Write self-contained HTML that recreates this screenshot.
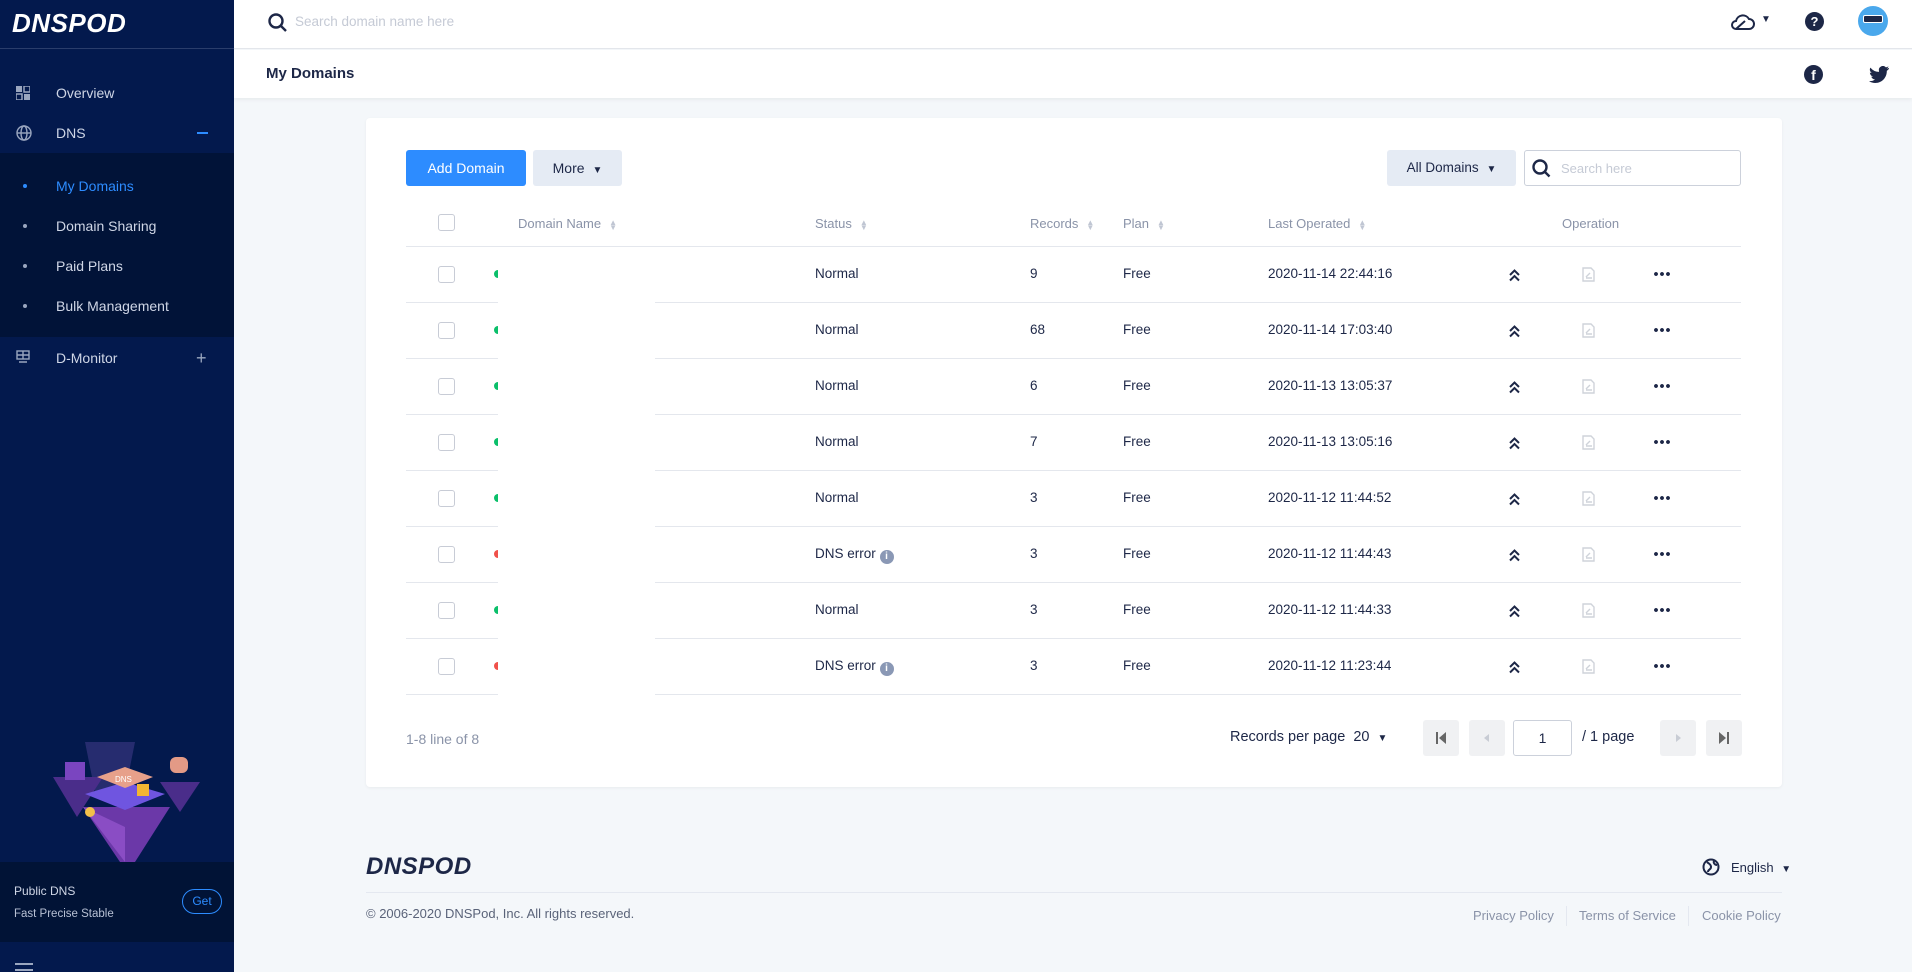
<!DOCTYPE html>
<html><head><meta charset="utf-8"><style>
*{box-sizing:border-box;margin:0;padding:0}
body{width:1912px;height:972px;overflow:hidden;background:#f4f7fa;font-family:"Liberation Sans",sans-serif;color:#1d2747;position:relative}
.abs{position:absolute}
#side{left:0;top:0;width:234px;height:972px;background:#03194d}
.logo{font-style:italic;font-weight:900;letter-spacing:0.5px;font-family:"Liberation Sans",sans-serif}
.nav{position:absolute;left:56px;font-size:14px;color:#cfd6e6}
.sub{position:absolute;left:0;top:153px;width:234px;height:184px;background:#011338}
.dot{position:absolute;left:23px;width:4px;height:4px;border-radius:50%;background:#9aa6bf}
#top{left:234px;top:0;width:1678px;height:49px;background:#fff;border-bottom:1px solid #e3e6eb}
#title{left:234px;top:50px;width:1678px;height:48px;background:#fff;box-shadow:0 2px 4px rgba(0,0,0,.05)}
#card{left:366px;top:118px;width:1416px;height:669px;background:#fff;border-radius:4px;box-shadow:0 1px 3px rgba(0,0,0,.05)}
.btn{position:absolute;height:36px;border-radius:3px;font-size:14px;line-height:36px;text-align:center}
.th{position:absolute;top:216px;font-size:13px;color:#8a93a8}
.hl{position:absolute;left:406px;width:1335px;height:1px;background:#e4e7ed}
.cell{position:absolute;font-size:13.5px;color:#1d2747}
.cb{position:absolute;left:438px;width:17px;height:17px;border:1px solid #c8ccd6;border-radius:3px;background:#fff}
.sd{position:absolute;left:494px;width:8px;height:8px;border-radius:50%}
.pg{position:absolute;top:720px;width:36px;height:36px;border-radius:3px;background:#f0f1f3}
.srt{display:inline-block;margin-left:8px;font-size:8px;color:#c0c6d3;vertical-align:middle;line-height:5px}
</style></head><body>
<div id="side" class="abs">
 <div class="abs logo" style="left:12px;top:8px;font-size:26px;color:#fff">DNSPOD</div>
 <div class="abs" style="left:0;top:48px;width:234px;height:1px;background:#2a3d6b"></div>
 <svg class="abs" style="left:16px;top:86px" width="14" height="14"><rect x="0" y="0" width="6" height="6" fill="#9aa6bf"/><rect x="8" y="0" width="6" height="6" fill="none" stroke="#9aa6bf" stroke-width="1.5"/><rect x="0" y="8" width="6" height="6" fill="none" stroke="#9aa6bf" stroke-width="1.5"/><rect x="8" y="8" width="6" height="6" fill="#9aa6bf"/></svg>
 <div class="nav" style="top:85px">Overview</div>
 <svg class="abs" style="left:16px;top:125px" width="16" height="16" fill="none" stroke="#9aa6bf" stroke-width="1.4"><circle cx="8" cy="8" r="7"/><ellipse cx="8" cy="8" rx="3" ry="7"/><path d="M1 8h14"/></svg>
 <div class="nav" style="top:125px">DNS</div>
 <div class="abs" style="left:197px;top:132px;width:11px;height:2px;background:#2d8cff"></div>
 <div class="sub"></div>
 <div class="dot" style="top:184px;background:#2d8cff"></div><div class="nav" style="top:178px;color:#2d8cff">My Domains</div>
 <div class="dot" style="top:224px"></div><div class="nav" style="top:218px">Domain Sharing</div>
 <div class="dot" style="top:264px"></div><div class="nav" style="top:258px">Paid Plans</div>
 <div class="dot" style="top:304px"></div><div class="nav" style="top:298px">Bulk Management</div>
 <svg class="abs" style="left:16px;top:350px" width="14" height="13" fill="none" stroke="#9aa6bf" stroke-width="1.4"><rect x="1" y="1" width="12" height="8"/><path d="M1 5h12M7 1v8M3 12h8"/></svg>
 <div class="nav" style="top:350px">D-Monitor</div>
 <div class="abs" style="left:196px;top:348px;color:#9aa6bf;font-size:18px">+</div>
 <svg class="abs" style="left:25px;top:732px" width="180" height="130">
  <polygon points="60,10 110,10 100,60 70,60" fill="#6a4fb0" opacity=".35"/>
  <polygon points="28,45 78,45 52,85" fill="#4a2d8a"/>
  <polygon points="58,75 145,75 110,130 95,130" fill="#6b38a8"/>
  <polygon points="58,75 100,95 100,130" fill="#8a4dc4"/>
  <polygon points="135,50 175,50 155,80" fill="#4a2d8a"/>
  <polygon points="60,62 100,50 140,62 100,78" fill="#6f55e0"/>
  <polygon points="72,45 100,35 128,45 100,56" fill="#e7a08a"/>
  <text x="90" y="50" font-size="8" fill="#fff" font-family="Liberation Sans">DNS</text>
  <rect x="40" y="30" width="20" height="18" fill="#7a45c0"/>
  <rect x="145" y="25" width="18" height="16" rx="6" fill="#e39a86"/>
  <circle cx="65" cy="80" r="5" fill="#f2c04a"/>
  <rect x="112" y="52" width="12" height="12" fill="#f2b632"/>
 </svg>
 <div class="abs" style="left:0;top:862px;width:234px;height:80px;background:#011336"></div>
 <div class="abs" style="left:14px;top:884px;font-size:12px;color:#cfd6e6">Public DNS</div>
 <div class="abs" style="left:14px;top:908px;font-size:11.5px;color:#b7c0d4">Fast Precise Stable</div>
 <div class="abs" style="left:182px;top:889px;width:40px;height:25px;border:1px solid #2d8cff;border-radius:13px;color:#2d8cff;font-size:12px;text-align:center;line-height:23px">Get</div>
 <div class="abs" style="left:15px;top:963px;width:18px;height:2px;background:#9aa6bf"></div>
 <div class="abs" style="left:15px;top:969px;width:18px;height:2px;background:#9aa6bf"></div>
</div>
<div id="top" class="abs">
 <svg class="abs" style="left:34px;top:13px" width="20" height="20" fill="none" stroke="#1d2747" stroke-width="2.4"><circle cx="8" cy="8" r="6.5"/><path d="M13 13l5 5"/></svg>
 <div class="abs" style="left:61px;top:14px;font-size:13.5px;color:#c5cad5">Search domain name here</div>
 <svg class="abs" style="left:1496px;top:13px" width="26" height="18" fill="none" stroke="#1d2747" stroke-width="2"><path d="M6 16h13a5 5 0 0 0 0-10 7 7 0 0 0-13 2 4 4 0 0 0 0 8zM6 16l9-8"/></svg>
 <div class="abs" style="left:1527px;top:14px;font-size:10px">▼</div>
 <div class="abs" style="left:1571px;top:12px;width:19px;height:19px;border-radius:50%;background:#1d2747;color:#fff;font-size:13px;font-weight:bold;text-align:center;line-height:19px">?</div>
 <div class="abs" style="left:1624px;top:6px;width:30px;height:30px;border-radius:50%;background:#4aa8ec"><div style="margin:9px 5px;width:20px;height:8px;background:#1d2747;border:1px solid #fff;border-radius:2px"></div></div>
</div>
<div id="title" class="abs">
 <div class="abs" style="left:32px;top:15px;font-size:15px;font-weight:bold">My Domains</div>
 <div class="abs" style="left:1570px;top:15px;width:19px;height:19px;border-radius:50%;background:#1d2747;color:#fff;font-size:14px;font-weight:bold;text-align:center;line-height:21px">f</div>
 <svg class="abs" style="left:1635px;top:16px" width="20" height="17"><path d="M20 2c-.7.3-1.5.5-2.3.6.8-.5 1.5-1.300 1.8-2.2-.8.5-1.7.8-2.6 1A4 4 0 0 0 10 5c0 .3 0 .6.1.9A11.4 11.4 0 0 1 1.4 1.6a4 4 0 0 0 1.3 5.4c-.7 0-1.3-.2-1.8-.5 0 2 1.4 3.6 3.2 4-.6.2-1.2.2-1.8.1.5 1.6 2 2.8 3.8 2.8A8.1 8.1 0 0 1 0 15.1 11.4 11.4 0 0 0 6.2 17c7.5 0 11.6-6.2 11.6-11.6v-.5c.9-.6 1.6-1.3 2.2-2.1z" fill="#1d2747"/></svg>
</div>
<div id="card" class="abs"></div>
<div class="btn" style="left:406px;top:150px;width:120px;background:#2d8cff;color:#fff">Add Domain</div>
<div class="btn" style="left:533px;top:150px;width:89px;background:#e5ebf4;color:#1d2747">More <span style="font-size:10px;margin-left:4px">▼</span></div>
<div class="btn" style="left:1387px;top:150px;width:129px;background:#e5ebf4;color:#1d2747;font-size:13.5px">All Domains <span style="font-size:10px;margin-left:4px">▼</span></div>
<div class="abs" style="left:1524px;top:150px;width:217px;height:36px;border:1px solid #ccd1db;border-radius:3px;background:#fff">
 <svg class="abs" style="left:7px;top:8px" width="20" height="20" fill="none" stroke="#1d2747" stroke-width="2.4"><circle cx="8" cy="8" r="6.5"/><path d="M13 13l4.5 4.5"/></svg>
 <div class="abs" style="left:36px;top:10px;font-size:13px;color:#c5cad5">Search here</div>
</div>
<div class="cb" style="top:214px"></div>
<div class="th" style="left:518px">Domain Name<span class="srt">▲<br>▼</span></div>
<div class="th" style="left:815px">Status<span class="srt">▲<br>▼</span></div>
<div class="th" style="left:1030px">Records<span class="srt">▲<br>▼</span></div>
<div class="th" style="left:1123px">Plan<span class="srt">▲<br>▼</span></div>
<div class="th" style="left:1268px">Last Operated<span class="srt">▲<br>▼</span></div>
<div class="th" style="left:1562px">Operation</div>
<div class="hl" style="top:246px"></div>
<div id="rows"></div>
<script>
var d=[["Normal","9","2020-11-14 22:44:16",1],["Normal","68","2020-11-14 17:03:40",1],["Normal","6","2020-11-13 13:05:37",1],["Normal","7","2020-11-13 13:05:16",1],["Normal","3","2020-11-12 11:44:52",1],["DNS error","3","2020-11-12 11:44:43",0],["Normal","3","2020-11-12 11:44:33",1],["DNS error","3","2020-11-12 11:23:44",0]];
var h="";
d.forEach(function(r,i){var c=274+i*56;
h+='<div class="cb" style="top:'+(c-8)+'px"></div>';
h+='<div class="sd" style="top:'+(c-4)+'px;background:'+(r[3]?'#0bbf6a':'#f0514a')+'"></div>';
h+='<div class="cell" style="left:815px;top:'+(c-8)+'px">'+r[0]+(r[3]?'':' <span style="display:inline-block;width:14px;height:14px;border-radius:50%;background:#8a98b5;color:#fff;font-size:10px;font-weight:bold;text-align:center;line-height:14px;vertical-align:-1px">i</span>')+'</div>';
h+='<div class="cell" style="left:1030px;top:'+(c-8)+'px">'+r[1]+'</div>';
h+='<div class="cell" style="left:1123px;top:'+(c-8)+'px">Free</div>';
h+='<div class="cell" style="left:1268px;top:'+(c-8)+'px">'+r[2]+'</div>';
h+='<svg class="abs" style="left:1508px;top:'+(c-6)+'px" width="13" height="14" fill="none" stroke="#1d2747" stroke-width="2"><path d="M2 7l4.5-4.5L11 7M2 12.5L6.5 8 11 12.5"/></svg>';
h+='<svg class="abs" style="left:1582px;top:'+(c-7)+'px" width="13" height="15" fill="none" stroke="#cfd3da" stroke-width="1.4"><path d="M1 1h8l3 3v10H1z"/><path d="M4 11h6M4 10l4-4"/></svg>';
h+='<div class="abs" style="left:1653px;top:'+(c-2)+'px;width:18px;height:4px;background:radial-gradient(circle,#1d2747 1.8px,transparent 2px) 0 0/6px 4px"></div>';
h+='<div class="hl" style="top:'+(c+28)+'px"></div>';});
h+='<div class="abs" style="left:498px;top:250px;width:157px;height:446px;background:#fff"></div>';
document.getElementById("rows").innerHTML=h;
</script>
<div class="abs" style="left:406px;top:731px;font-size:14px;color:#8a93a8">1-8 line of 8</div>
<div class="abs" style="left:1230px;top:729px;font-size:14.5px">Records per page&nbsp; 20 <span style="font-size:10px;margin-left:4px">▼</span></div>
<div class="pg" style="left:1423px"><svg width="36" height="36"><rect x="13" y="12" width="2" height="12" fill="#666"/><path d="M23 12v12l-7-6z" fill="#666"/></svg></div>
<div class="pg" style="left:1469px"><svg width="36" height="36"><path d="M20 14v8l-5-4z" fill="#c8ccd4"/></svg></div>
<div class="abs" style="left:1513px;top:720px;width:59px;height:36px;border:1px solid #ccd1db;border-radius:3px;background:#fff;text-align:center;line-height:34px;font-size:14px">1</div>
<div class="abs" style="left:1582px;top:729px;font-size:14.5px">/ 1 page</div>
<div class="pg" style="left:1660px"><svg width="36" height="36"><path d="M16 14v8l5-4z" fill="#c8ccd4"/></svg></div>
<div class="pg" style="left:1706px"><svg width="36" height="36"><path d="M13 12v12l7-6z" fill="#666"/><rect x="21" y="12" width="2" height="12" fill="#666"/></svg></div>
<div class="abs logo" style="left:366px;top:853px;font-size:24px;color:#1d2747">DNSPOD</div>
<svg class="abs" style="left:1702px;top:858px" width="18" height="18" fill="none" stroke="#1d2747" stroke-width="2"><circle cx="9" cy="9" r="7.5"/><path d="M5 4c2 2 4 2 4 5s-3 2-3 5M12 3c-1 2 1 4 3 4" /></svg>
<div class="abs" style="left:1731px;top:860px;font-size:13px">English <span style="font-size:10px;margin-left:4px">▼</span></div>
<div class="abs" style="left:366px;top:892px;width:1416px;height:1px;background:#e4e8f0"></div>
<div class="abs" style="left:366px;top:906px;font-size:13px;color:#5a6379">© 2006-2020 DNSPod, Inc. All rights reserved.</div>
<div class="abs" style="left:1473px;top:908px;font-size:13px;color:#8a93a8">Privacy Policy</div>
<div class="abs" style="left:1566px;top:906px;width:1px;height:20px;background:#e4e8f0"></div>
<div class="abs" style="left:1579px;top:908px;font-size:13px;color:#8a93a8">Terms of Service</div>
<div class="abs" style="left:1688px;top:906px;width:1px;height:20px;background:#e4e8f0"></div>
<div class="abs" style="left:1702px;top:908px;font-size:13px;color:#8a93a8">Cookie Policy</div>
</body></html>
